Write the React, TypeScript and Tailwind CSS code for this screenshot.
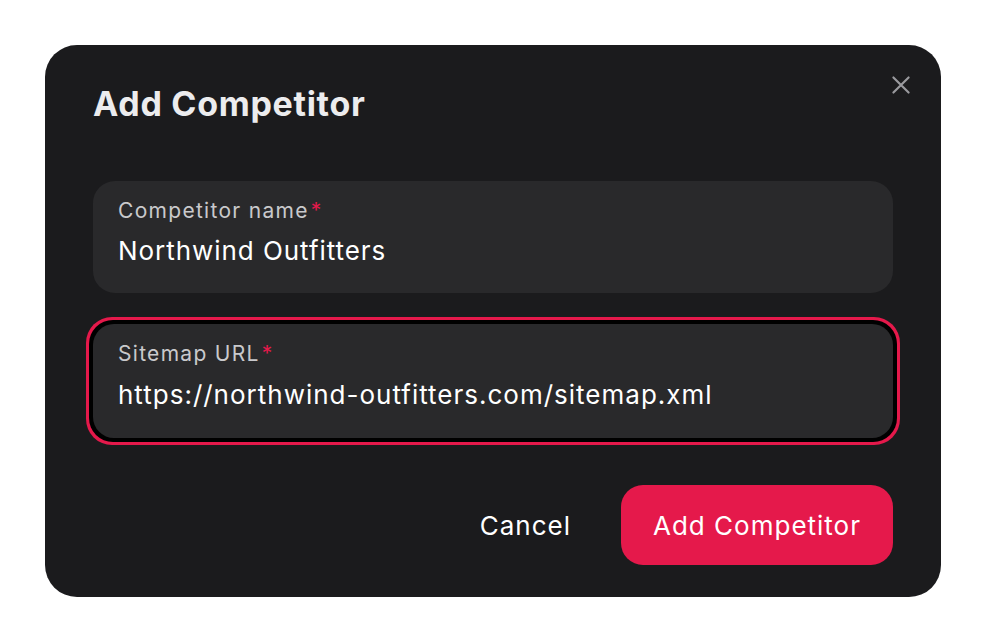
import React from "react";

export default function App() {
  return (
    <div
      className="min-h-screen w-full bg-white pt-[45px] pl-[45px]"
      style={{ fontFamily: "Inter, 'Noto Sans', sans-serif" }}
    >
      <div className="relative w-[896px] h-[552px] rounded-[32px] bg-[#1b1b1d] px-[48px] pt-[39px]">
        <button className="absolute right-[27px] top-[27px] text-[#9a9a9e]">
          <svg width="26" height="26" viewBox="0 0 24 24" fill="none" stroke="currentColor" strokeWidth="2" strokeLinecap="round">
            <path d="M5 5l14 14M19 5L5 19" />
          </svg>
        </button>
        <h2 className="text-[34px] leading-[40px] font-bold text-[#ececee] tracking-[0.7px]">Add Competitor</h2>

        <div className="mt-[57px] flex flex-col gap-[24px]">
          <div className="h-[112px] rounded-[22px] bg-[#29292b] px-[25px] pt-[16px]">
            <div className="text-[21px] leading-[28px] text-[#c9c9cc] tracking-[1.3px]">
              Competitor name<span className="text-[#e5194b] ml-[2px]">*</span>
            </div>
            <div className="mt-[10px] text-[26px] leading-[32px] text-white tracking-[0.95px]">Northwind Outfitters</div>
          </div>

          <div className="rounded-[26px] p-[3px] bg-[#e5194b] -mx-[7px]">
            <div className="rounded-[24px] bg-black p-[4px]">
              <div className="h-[114px] rounded-[21px] bg-[#29292b] px-[25px] pt-[16px]">
                <div className="text-[21px] leading-[28px] text-[#c9c9cc] tracking-[1.3px]">
                  Sitemap URL<span className="text-[#e5194b] ml-[2px]">*</span>
                </div>
                <div className="mt-[11px] text-[26px] leading-[32px] text-white tracking-[1px]">https://northwind-outfitters.com/sitemap.xml</div>
              </div>
            </div>
          </div>
        </div>

        <div className="mt-[40px] flex items-center justify-end gap-[50px]">
          <button className="text-[26px] text-white tracking-[1px]">Cancel</button>
          <button className="h-[80px] w-[272px] rounded-[22px] bg-[#e5194b] text-[26px] text-white tracking-[1px]">Add Competitor</button>
        </div>
      </div>
    </div>
  );
}
